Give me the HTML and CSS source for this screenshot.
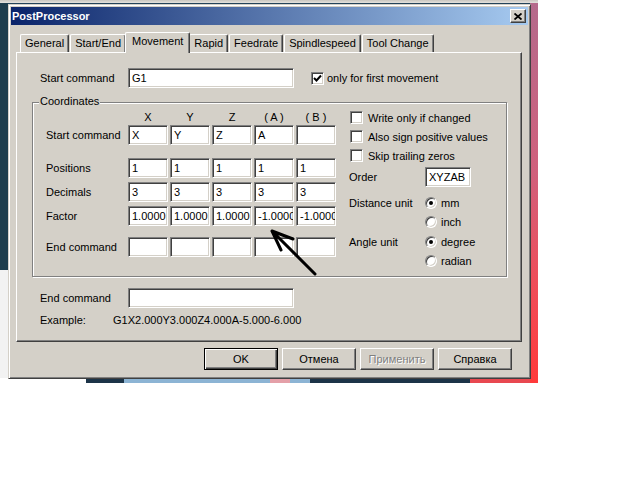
FILE: index.html
```html
<!DOCTYPE html>
<html lang="en">
<head>
    <meta charset="UTF-8">
    <meta name="viewport" content="width=device-width, initial-scale=1.0">
    <title>PostProcessor</title>
    <link rel="stylesheet" href="styles.css">
</head>
<body>
    <div class="desktop">
        <div class="window">
            <div class="titlebar">
                <span class="title">PostProcessor</span>
                <button class="close-btn" aria-label="Close">
                    <svg width="8" height="7" viewBox="0 0 8 7"><path d="M0.5 0.5 L7.5 6.5 M7.5 0.5 L0.5 6.5" stroke="#000" stroke-width="1.8" fill="none"/></svg>
                </button>
            </div>

            <div class="tabs">
                <div class="tab">General</div>
                <div class="tab">Start/End</div>
                <div class="tab active">Movement</div>
                <div class="tab">Rapid</div>
                <div class="tab">Feedrate</div>
                <div class="tab">Spindlespeed</div>
                <div class="tab">Tool Change</div>
            </div>

            <div class="panel">
                <div class="row">
                    <span class="label-wide">Start command</span>
                    <div class="field wide">G1</div>
                    <span class="check checked start-check">
                        <svg width="9" height="9" viewBox="0 0 9 9"><path d="M1 4 L3.5 6.5 L8 1.5" stroke="#000" stroke-width="2" fill="none"/></svg>
                    </span>
                    <span class="check-text">only for first movement</span>
                </div>

                <div class="group">
                    <span class="legend">Coordinates</span>

                    <div class="coords">
                        <div class="coord-row head">
                            <span class="lbl"></span>
                            <span class="col">X</span>
                            <span class="col">Y</span>
                            <span class="col">Z</span>
                            <span class="col">( A )</span>
                            <span class="col">( B )</span>
                        </div>
                        <div class="coord-row">
                            <span class="lbl">Start command</span>
                            <div class="field">X</div>
                            <div class="field">Y</div>
                            <div class="field">Z</div>
                            <div class="field">A</div>
                            <div class="field"></div>
                        </div>
                        <div class="coord-row spaced">
                            <span class="lbl">Positions</span>
                            <div class="field">1</div>
                            <div class="field">1</div>
                            <div class="field">1</div>
                            <div class="field">1</div>
                            <div class="field">1</div>
                        </div>
                        <div class="coord-row tight">
                            <span class="lbl">Decimals</span>
                            <div class="field">3</div>
                            <div class="field">3</div>
                            <div class="field">3</div>
                            <div class="field">3</div>
                            <div class="field">3</div>
                        </div>
                        <div class="coord-row tight">
                            <span class="lbl">Factor</span>
                            <div class="field">1.0000</div>
                            <div class="field">1.0000</div>
                            <div class="field">1.0000</div>
                            <div class="field">-1.0000</div>
                            <div class="field">-1.0000</div>
                        </div>
                        <div class="coord-row last">
                            <span class="lbl">End command</span>
                            <div class="field"></div>
                            <div class="field"></div>
                            <div class="field"></div>
                            <div class="field"></div>
                            <div class="field"></div>
                        </div>
                    </div>

                    <div class="options">
                        <div class="opt-row"><span class="check"></span><span>Write only if changed</span></div>
                        <div class="opt-row"><span class="check"></span><span>Also sign positive values</span></div>
                        <div class="opt-row"><span class="check"></span><span>Skip trailing zeros</span></div>
                        <div class="order-row">
                            <span class="opt-label">Order</span>
                            <div class="field order">XYZAB</div>
                        </div>
                        <div class="radio-group distance">
                            <span class="opt-label">Distance unit</span>
                            <div class="radio-item"><span class="radio on"></span>mm</div>
                            <div class="radio-item"><span class="radio"></span>inch</div>
                        </div>
                        <div class="radio-group angle">
                            <span class="opt-label">Angle unit</span>
                            <div class="radio-item"><span class="radio on"></span>degree</div>
                            <div class="radio-item"><span class="radio"></span>radian</div>
                        </div>
                    </div>
                </div>

                <div class="row end-row">
                    <span class="label-wide">End command</span>
                    <div class="field wide"></div>
                </div>
                <div class="row example-row">
                    <span class="label-example">Example:</span>
                    <span>G1X2.000Y3.000Z4.000A-5.000-6.000</span>
                </div>
            </div>

            <div class="buttons">
                <button class="btn default">OK</button>
                <button class="btn">Отмена</button>
                <button class="btn disabled">Применить</button>
                <button class="btn">Справка</button>
            </div>
        </div>
    </div>

    <svg class="arrow" width="618" height="499" viewBox="0 0 618 499">
        <path d="M315 274 L272 231 M272 231 L293 239 M272 231 L281 250" stroke="#000" stroke-width="3" stroke-linecap="round" fill="none"/>
    </svg>
</body>
</html>
```

FILE: styles.css
```css
:root {
    --face: #d4d0c8;
    --shadow: #808080;
    --dark: #404040;
    --light: #ffffff;
}

* {
    box-sizing: border-box;
}

body {
    margin: 0;
    width: 618px;
    height: 499px;
    overflow: hidden;
    position: relative;
    background: #ffffff;
    font-family: "Liberation Sans", Arial, sans-serif;
    font-size: 11px;
    color: #000;
}

/* desktop behind the dialog */
.desktop {
    width: 538px;
    height: 383px;
    padding: 4px 0 0 8px;
    background:
        linear-gradient(#c9c6c0, #e4e2de) 0 0 / 100% 3px no-repeat,
        linear-gradient(to bottom, #b46a8c, #d0607c 45%, #f04c58 75%, #ff3a3a) 100% 0 / 8px 100% no-repeat,
        linear-gradient(to right, #fff 0 86px, #1c3448 86px 124px, #8cb4d4 124px 270px, #e4a0a8 270px 290px, #8cb4d4 290px 310px, #1c3448 310px 470px, #e84850 470px) 0 100% / 100% 5px no-repeat,
        linear-gradient(#1e3d4d 0 270px, #f2f2f2 270px) 0 0 / 8px 100% no-repeat,
        #23435a;
}

.window {
    width: 523px;
    height: 375px;
    padding: 2px;
    background: var(--face);
    border: 1px solid;
    border-color: var(--face) var(--dark) var(--dark) var(--face);
    box-shadow: inset 1px 1px var(--light), inset -1px -1px var(--shadow);
    display: flex;
    flex-direction: column;
}

.titlebar {
    height: 18px;
    padding: 0 2px 0 1px;
    background: linear-gradient(to right, #0a246a, #a6caf0);
    display: flex;
    align-items: center;
    justify-content: space-between;
}

.title {
    color: #fff;
    font-weight: bold;
    font-size: 11px;
}

.close-btn {
    width: 16px;
    height: 14px;
    padding: 0;
    background: var(--face);
    border: 1px solid;
    border-color: var(--light) var(--dark) var(--dark) var(--light);
    box-shadow: inset -1px -1px var(--shadow);
    display: flex;
    align-items: center;
    justify-content: center;
}

/* tabs */
.tabs {
    margin-top: 7px;
    padding-left: 9px;
    height: 20px;
    display: flex;
    align-items: flex-end;
    gap: 1px;
    position: relative;
    z-index: 1;
}

.tab {
    height: 18px;
    padding: 0 4px;
    line-height: 17px;
    background: var(--face);
    border-top: 1px solid var(--light);
    border-left: 1px solid var(--light);
    border-right: 1px solid var(--dark);
    border-radius: 2px 2px 0 0;
    box-shadow: inset -1px 0 var(--shadow);
    white-space: nowrap;
}

.tab.active {
    height: 21px;
    margin: 0 -2px -1px;
    padding: 0 6px;
    line-height: 17px;
    position: relative;
    z-index: 2;
}

.panel {
    height: 290px;
    margin: 0 6px 0 5px;
    padding: 15px 0 0 23px;
    border: 1px solid;
    border-color: var(--light) var(--dark) var(--dark) var(--light);
    box-shadow: inset -1px -1px var(--shadow);
}

.row {
    height: 20px;
    display: flex;
    align-items: center;
}

.label-wide {
    width: 88px;
}

.label-example {
    width: 73px;
}

.field {
    width: 40px;
    height: 20px;
    padding-left: 3px;
    line-height: 18px;
    background: #fff;
    border: 1px solid;
    border-color: var(--shadow) var(--light) var(--light) var(--shadow);
    box-shadow: inset 1px 1px var(--dark), inset -1px -1px var(--face);
    white-space: nowrap;
    overflow: hidden;
    flex-shrink: 0;
}

.field.wide {
    width: 166px;
}

.field.order {
    width: 46px;
}

.check {
    width: 13px;
    height: 13px;
    background: #fff;
    border: 1px solid;
    border-color: var(--shadow) var(--light) var(--light) var(--shadow);
    box-shadow: inset 1px 1px var(--dark), inset -1px -1px var(--face);
    display: flex;
    align-items: center;
    justify-content: center;
    flex-shrink: 0;
}

.start-check {
    margin-left: 17px;
}

.check-text {
    margin-left: 3px;
}

/* coordinates group */
.group {
    position: relative;
    width: 475px;
    height: 175px;
    margin: 14px 0 0 -8px;
    padding: 5px 0 0 13px;
    border: 1px solid var(--shadow);
    box-shadow: inset 1px 1px var(--light), 1px 1px var(--light);
    display: flex;
    align-items: flex-start;
}

.legend {
    position: absolute;
    top: -8px;
    left: 6px;
    padding: 0 1px;
    background: var(--face);
}

.coords {
    margin-top: 1px;
    width: 290px;
}

.coord-row {
    height: 20px;
    display: flex;
    align-items: center;
    gap: 2px;
}

.coord-row.head {
    height: 16px;
}

.coord-row.spaced {
    margin-top: 13px;
}

.coord-row.tight {
    margin-top: 4px;
}

.coord-row.last {
    margin-top: 11px;
}

.lbl {
    width: 80px;
}

.col {
    width: 40px;
    text-align: center;
    white-space: pre;
}

.options {
    margin-left: 13px;
}

.opt-row {
    height: 19px;
    display: flex;
    align-items: center;
    gap: 5px;
    padding-left: 1px;
}

.order-row {
    margin-top: 2px;
    height: 20px;
    display: flex;
    align-items: center;
}

.opt-label {
    width: 76px;
}

.radio-group {
    display: grid;
    grid-template-columns: 76px auto;
    grid-auto-rows: 19px;
    align-items: center;
}

.radio-group .opt-label {
    grid-row: 1;
}

.radio-group .radio-item {
    grid-column: 2;
}

.radio-group.distance {
    margin-top: 6px;
}

.radio-group.angle {
    margin-top: 1px;
}

.radio-item {
    display: flex;
    align-items: center;
    gap: 4px;
}

.radio {
    width: 12px;
    height: 12px;
    border-radius: 50%;
    background: #fff;
    border: 1px solid;
    border-color: var(--shadow) var(--light) var(--light) var(--shadow);
    box-shadow: inset 1px 1px var(--dark), inset -1px -1px var(--face);
    display: flex;
    align-items: center;
    justify-content: center;
}

.radio.on::after {
    content: "";
    width: 4px;
    height: 4px;
    border-radius: 50%;
    background: #000;
}

.end-row {
    margin-top: 11px;
}

.example-row {
    margin-top: 4px;
    height: 16px;
}

/* dialog buttons */
.buttons {
    margin-top: 6px;
    padding-right: 16px;
    display: flex;
    justify-content: flex-end;
    gap: 4px;
}

.btn {
    width: 74px;
    height: 22px;
    padding: 0;
    font: inherit;
    color: #000;
    background: var(--face);
    border: 1px solid;
    border-color: var(--light) var(--dark) var(--dark) var(--light);
    box-shadow: inset -1px -1px var(--shadow);
}

.btn.default {
    border-color: #000;
    box-shadow: inset 1px 1px var(--light), inset -1px -1px var(--dark), inset -2px -2px var(--shadow);
}

.btn.disabled {
    color: var(--shadow);
    text-shadow: 1px 1px var(--light);
}

.arrow {
    position: absolute;
    top: 0;
    left: 0;
    pointer-events: none;
}
```
